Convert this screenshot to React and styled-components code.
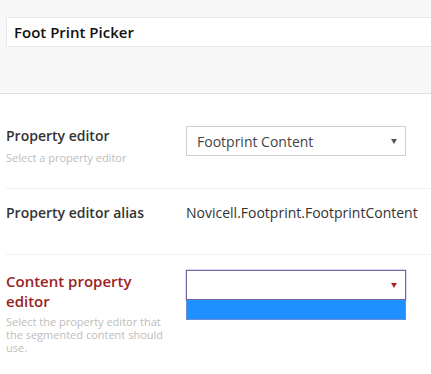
import React from "react";
import styled, { createGlobalStyle } from "styled-components";

const Global = createGlobalStyle`
  html, body { margin: 0; padding: 0; background: #fff; }
  body { font-family: "Open Sans", "Noto Sans", sans-serif; color: #333; overflow: hidden; }
`;

const Page = styled.div`
  width: 431px;
  height: 374px;
  overflow: hidden;
  position: relative;
`;

const Header = styled.div`
  background: #f7f7f7;
  border-bottom: 1px solid #e0e0e0;
  padding: 17px 0 0 6px;
  box-sizing: border-box;
  height: 94px;
`;

const NameInput = styled.div`
  width: 460px;
  height: 30px;
  box-sizing: border-box;
  background: #fff;
  border: 1px solid #e9e9e9;
  padding: 0 0 0 7px;
  display: flex;
  align-items: center;
  font-size: 15px;
  font-weight: 600;
  color: #111;
`;

const Body = styled.div`
  padding: 16px 0 0 6px;
`;

const Row = styled.div`
  display: grid;
  grid-template-columns: 160px 1fr;
  column-gap: 20px;
  padding: ${(p) => p.$pad};
  border-bottom: ${(p) => (p.$last ? "none" : "1px solid #f1f1f1")};
`;

const LabelCol = styled.div`
  display: flex;
  flex-direction: column;
`;

const Label = styled.div`
  font-weight: 600;
  line-height: 20px;
  color: ${(p) => (p.$error ? "#9a1f1f" : "#333")};
  font-size: ${(p) => (p.$error ? "15px" : "14px")};
  padding-top: ${(p) => (p.$error ? "1px" : "0")};
`;

const Desc = styled.div`
  margin-top: ${(p) => p.$mt || "5px"};
  font-size: 11px;
  line-height: 13px;
  color: #bdbdbd;
`;

const Control = styled.div`
  position: relative;
  width: 220px;
`;

const Select = styled.div`
  height: 30px;
  box-sizing: border-box;
  border: 1px solid ${(p) => (p.$focus ? "#6e6a9f" : "#cfcfcf")};
  box-shadow: ${(p) => (p.$focus ? "0 0 0 1px rgba(140,150,220,0.35)" : "none")};
  background: #fff;
  display: flex;
  align-items: center;
  justify-content: space-between;
  padding: 0 8px 0 10px;
  font-size: 14px;
  color: #444;
`;

const Arrow = styled.span`
  width: 0;
  height: 0;
  border-left: 3.5px solid transparent;
  border-right: 3.5px solid transparent;
  border-top: 5px solid ${(p) => p.$color};
  margin-top: 1px;
`;

const DropList = styled.div`
  position: absolute;
  left: 0;
  top: 30px;
  width: 220px;
  height: 20px;
  box-sizing: border-box;
  background: #1e90ff;
  border: 1px solid #6a8fd6;
  border-top: none;
`;

const Value = styled.div`
  font-size: 14px;
  line-height: 20px;
  color: #333;
`;

export default function App() {
  return (
    <Page>
      <Global />
      <Header>
        <NameInput>Foot Print Picker</NameInput>
      </Header>
      <Body>
        <Row $pad="16px 0 24px 0">
          <LabelCol>
            <Label>Property editor</Label>
            <Desc>Select a property editor</Desc>
          </LabelCol>
          <Control>
            <Select>
              <span>Footprint Content</span>
              <Arrow $color="#555" />
            </Select>
          </Control>
        </Row>
        <Row $pad="14px 0 31px 0">
          <LabelCol>
            <Label>Property editor alias</Label>
          </LabelCol>
          <Value>Novicell.Footprint.FootprintContent</Value>
        </Row>
        <Row $pad="15px 0 20px 0" $last>
          <LabelCol>
            <Label $error>Content property editor</Label>
            <Desc $mt="4px">
              Select the property editor that the segmented content should use.
            </Desc>
          </LabelCol>
          <Control>
            <Select $focus>
              <span />
              <Arrow $color="#a52a2a" />
            </Select>
            <DropList />
          </Control>
        </Row>
      </Body>
    </Page>
  );
}
